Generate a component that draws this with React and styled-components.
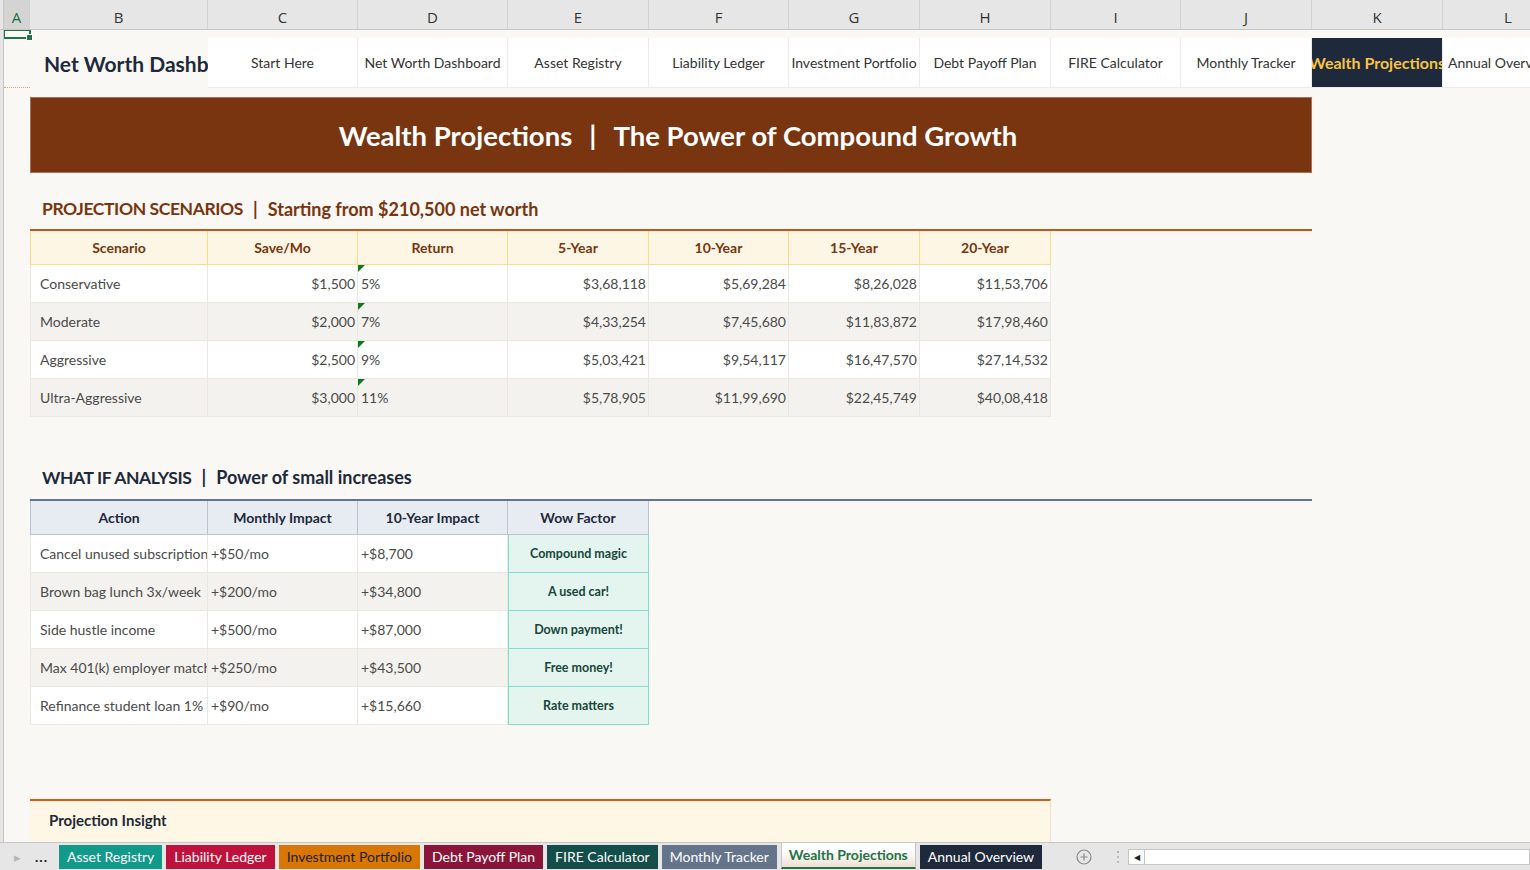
import styled, { createGlobalStyle } from "styled-components";

const WIDTHS = [26, 178, 150, 150, 141, 140, 131, 131, 130, 131, 131, 131];
const LETTERS = ["A", "B", "C", "D", "E", "F", "G", "H", "I", "J", "K", "L"];
const TEMPLATE = WIDTHS.map((w) => `${w}px`).join(" ");

const GlobalStyle = createGlobalStyle`
  html, body { margin: 0; padding: 0; }
  body {
    font-family: Lato, "Liberation Sans", sans-serif;
    background: #f9f8f4;
    overflow: hidden;
  }
  * { box-sizing: border-box; }
`;

const Window = styled.div`
  width: 1530px;
  height: 870px;
  display: flex;
  flex-direction: column;
  overflow: hidden;
  background: #f9f8f4;
`;

/* ---------- column letters ---------- */
const ColumnHeaders = styled.div`
  display: flex;
  height: 30px;
  flex-shrink: 0;
  background: #e6e6e6;
  border-bottom: 1px solid #c6c6c6;
`;

const Corner = styled.div`
  flex: 0 0 4px;
  border-right: 1px solid #c6c6c6;
`;

const ColLetter = styled.div`
  flex: 0 0 ${(p) => p.$w}px;
  display: flex;
  align-items: center;
  justify-content: center;
  padding-top: 4px;
  font-family: "Open Sans", sans-serif;
  font-size: 15px;
  color: ${(p) => (p.$active ? "#1d7044" : "#333")};
  background: ${(p) => (p.$active ? "#d4d4d4" : "transparent")};
  border-right: 1px solid #d2d2d2;
`;

/* ---------- sheet ---------- */
const SheetArea = styled.div`
  flex: 1;
  display: flex;
  overflow: hidden;
`;

const RowHeaders = styled.div`
  flex: 0 0 4px;
  background: #e6e6e6;
  border-right: 1px solid #c6c6c6;
`;

const Grid = styled.div`
  flex: 1;
  display: flex;
  flex-direction: column;
  overflow: hidden;
  position: relative;
`;

const Row = styled.div`
  display: grid;
  grid-template-columns: ${TEMPLATE};
  height: ${(p) => p.$h}px;
  flex-shrink: 0;
`;

const Selection = styled.div`
  position: absolute;
  top: -1px;
  left: -1px;
  width: 28px;
  height: 10px;
  border: 2px solid #217346;
  &::after {
    content: "";
    position: absolute;
    right: -4px;
    bottom: -4px;
    width: 5px;
    height: 5px;
    background: #217346;
    border: 1px solid #fff;
  }
`;

const MarginCell = styled.div`
  grid-column: 1;
  border-bottom: ${(p) => (p.$dotted ? "1px dotted #e3a06e" : "none")};
`;

const SheetTitle = styled.div`
  grid-column: 2;
  display: flex;
  align-items: center;
  padding-left: 14px;
  font-size: 21px;
  font-weight: 700;
  color: #1e293b;
  white-space: nowrap;
  overflow: hidden;
`;

const NavCell = styled.div`
  display: flex;
  align-items: center;
  justify-content: ${(p) => (p.$left ? "flex-start" : "center")};
  padding-left: ${(p) => (p.$left ? "5px" : "0")};
  white-space: nowrap;
  overflow: hidden;
  font-size: ${(p) => (p.$active ? "16px" : "14px")};
  font-weight: ${(p) => (p.$active ? 700 : 400)};
  color: ${(p) => (p.$active ? "#f6c343" : "#333")};
  background: ${(p) => (p.$active ? "#1e293b" : "#fff")};
  border-right: 1px solid #ececec;
  border-bottom: 1px solid #ececec;
`;

const Banner = styled.div`
  grid-column: 2 / 11;
  display: flex;
  align-items: center;
  justify-content: center;
  padding-left: 14px;
  background: #78350f;
  border: 1px solid #a9705a;
  color: #fff;
  font-size: 27.5px;
  font-weight: 700;
  white-space: pre;
`;

const BannerPipe = styled.span`
  margin: 0 17px;
`;

const SectionTitle = styled.div`
  grid-column: 2 / 11;
  display: flex;
  align-items: center;
  padding: 0 0 2px 12px;
  font-size: 18px;
  font-weight: 700;
  white-space: pre;
  color: ${(p) => p.$color};
  border-bottom: 2px solid ${(p) => p.$line};
`;

const Caps = styled.span`
  font-size: 17.5px;
  letter-spacing: -0.4px;
`;

const Pipe = styled.span`
  margin: 0 10px;
`;

const HeadCell = styled.div`
  display: flex;
  align-items: center;
  justify-content: center;
  font-size: 14px;
  font-weight: 700;
  color: ${(p) => p.$color};
  background: ${(p) => p.$bg};
  border-right: 1px solid ${(p) => p.$border};
  border-bottom: 1px solid ${(p) => p.$border};
  ${(p) => p.$first && `border-left: 1px solid ${p.$border};`}
`;

const Cell = styled.div`
  position: relative;
  display: flex;
  align-items: center;
  justify-content: ${(p) => (p.$align === "right" ? "flex-end" : "flex-start")};
  padding: ${(p) => (p.$align === "right" ? "0 2px 0 0" : `0 0 0 ${p.$pad || 3}px`)};
  font-size: 14px;
  color: #4a4a4a;
  white-space: nowrap;
  overflow: hidden;
  background: ${(p) => (p.$alt ? "#f4f2ee" : "#fff")};
  border-right: 1px solid #ebe8e2;
  border-bottom: 1px solid #ebe8e2;
  ${(p) => p.$first && "border-left: 1px solid #ebe8e2;"}
  ${(p) =>
    p.$flag &&
    `&::before {
      content: "";
      position: absolute;
      top: 0;
      left: 0;
      border-top: 7px solid #0b7a1c;
      border-right: 7px solid transparent;
    }`}
`;

const WowCell = styled.div`
  display: flex;
  align-items: center;
  justify-content: center;
  font-size: 12.5px;
  font-weight: 700;
  color: #17463b;
  background: #e4f4ee;
  border: 1px solid #80dfcd;
  border-top: none;
`;

const InsightBox = styled.div`
  grid-column: 2 / 9;
  background: #fef7e6;
  border-top: 2px solid #c8601c;
  border-right: 1px solid #efe2c8;
  padding: 10px 0 0 19px;
  font-size: 15px;
  font-weight: 700;
  color: #1f2937;
`;

/* ---------- sheet tabs ---------- */
const TabBar = styled.div`
  height: 28px;
  flex-shrink: 0;
  display: flex;
  align-items: center;
  background: #e6e6e6;
  border-top: 1px solid #c6c6c6;
`;

const TabNav = styled.div`
  display: flex;
  align-items: center;
  width: 59px;
  padding-left: 14px;
  gap: 14px;
  font-size: 13px;
  color: #b5b5b5;
  & b {
    color: #222;
    font-size: 14px;
    letter-spacing: 1px;
  }
`;

const Tab = styled.div`
  height: 24px;
  display: flex;
  align-items: center;
  padding: 0 8px;
  margin-right: 4px;
  font-size: 14px;
  white-space: nowrap;
  color: ${(p) => p.$fg || "#fff"};
  background: ${(p) => p.$bg};
  font-weight: ${(p) => (p.$active ? 700 : 400)};
  ${(p) =>
    p.$active &&
    `height: 26px;
     margin-top: -2px;
     padding: 0 7px;
     background: linear-gradient(#ffffff 30%, #f0dfd2);
     border-bottom: 2px solid #217346;
     border-left: 1px solid #c6c6c6;
     border-right: 1px solid #c6c6c6;`}
`;

const TabTools = styled.div`
  display: flex;
  align-items: center;
  margin-left: 30px;
  gap: 24px;
  color: #8a8a8a;
`;

const HScroll = styled.div`
  flex: 1;
  height: 16px;
  margin-left: 8px;
  display: flex;
  background: #fff;
  border: 1px solid #c6c6c6;
`;

const ScrollBtn = styled.div`
  width: 16px;
  display: flex;
  align-items: center;
  justify-content: center;
  border-right: 1px solid #c6c6c6;
  font-size: 8px;
  color: #222;
`;

const navItems = [
  "Start Here",
  "Net Worth Dashboard",
  "Asset Registry",
  "Liability Ledger",
  "Investment Portfolio",
  "Debt Payoff Plan",
  "FIRE Calculator",
  "Monthly Tracker",
];

const scenarios = [
  ["Conservative", "$1,500", "5%", "$3,68,118", "$5,69,284", "$8,26,028", "$11,53,706"],
  ["Moderate", "$2,000", "7%", "$4,33,254", "$7,45,680", "$11,83,872", "$17,98,460"],
  ["Aggressive", "$2,500", "9%", "$5,03,421", "$9,54,117", "$16,47,570", "$27,14,532"],
  ["Ultra-Aggressive", "$3,000", "11%", "$5,78,905", "$11,99,690", "$22,45,749", "$40,08,418"],
];

const whatIf = [
  ["Cancel unused subscription", "+$50/mo", "+$8,700", "Compound magic"],
  ["Brown bag lunch 3x/week", "+$200/mo", "+$34,800", "A used car!"],
  ["Side hustle income", "+$500/mo", "+$87,000", "Down payment!"],
  ["Max 401(k) employer match", "+$250/mo", "+$43,500", "Free money!"],
  ["Refinance student loan 1%", "+$90/mo", "+$15,660", "Rate matters"],
];

const tabs = [
  { label: "Asset Registry", bg: "#11998a" },
  { label: "Liability Ledger", bg: "#be123c" },
  { label: "Investment Portfolio", bg: "#d97706", fg: "#1f1f1f" },
  { label: "Debt Payoff Plan", bg: "#8a1538" },
  { label: "FIRE Calculator", bg: "#134e4a" },
  { label: "Monthly Tracker", bg: "#64748b" },
  { label: "Wealth Projections", active: true, fg: "#217346" },
  { label: "Annual Overview", bg: "#1e293b" },
];

const amber = { $color: "#78350f", $bg: "#fef6e4", $border: "#fcdc86" };
const slate = { $color: "#1e293b", $bg: "#e7ecf2", $border: "#b9c4d2" };

export default function App() {
  return (
    <Window>
      <GlobalStyle />
      <ColumnHeaders>
        <Corner />
        {LETTERS.map((l, i) => (
          <ColLetter key={l} $w={WIDTHS[i]} $active={i === 0}>
            {l}
          </ColLetter>
        ))}
      </ColumnHeaders>

      <SheetArea>
        <RowHeaders />
        <Grid>
          <Selection />
          <Row $h={8} />
          <Row $h={50}>
            <MarginCell $dotted />
            <SheetTitle>Net Worth Dashboard</SheetTitle>
            {navItems.map((n) => (
              <NavCell key={n}>{n}</NavCell>
            ))}
            <NavCell $active>Wealth Projections</NavCell>
            <NavCell $left>Annual Overview</NavCell>
          </Row>
          <Row $h={9} />
          <Row $h={76}>
            <MarginCell />
            <Banner>
              Wealth Projections
              <BannerPipe>|</BannerPipe>
              The Power of Compound Growth
            </Banner>
          </Row>
          <Row $h={17} />
          <Row $h={41}>
            <MarginCell />
            <SectionTitle $color="#78350f" $line="#c2571a">
              <Caps>PROJECTION SCENARIOS</Caps>
              <Pipe>|</Pipe>
              Starting from $210,500 net worth
            </SectionTitle>
          </Row>
          <Row $h={34}>
            <MarginCell />
            {["Scenario", "Save/Mo", "Return", "5-Year", "10-Year", "15-Year", "20-Year"].map(
              (h, i) => (
                <HeadCell key={h} {...amber} $first={i === 0}>
                  {h}
                </HeadCell>
              )
            )}
          </Row>
          {scenarios.map((r, ri) => (
            <Row $h={38} key={r[0]}>
              <MarginCell />
              <Cell $first $pad={9} $alt={ri % 2 === 1}>
                {r[0]}
              </Cell>
              <Cell $align="right" $alt={ri % 2 === 1}>
                {r[1]}
              </Cell>
              <Cell $flag $alt={ri % 2 === 1}>
                {r[2]}
              </Cell>
              {r.slice(3).map((v, vi) => (
                <Cell key={vi} $align="right" $alt={ri % 2 === 1}>
                  {v}
                </Cell>
              ))}
            </Row>
          ))}

          <Row $h={40} />
          <Row $h={44}>
            <MarginCell />
            <SectionTitle $color="#1e293b" $line="#64748b">
              <Caps>WHAT IF ANALYSIS</Caps>
              <Pipe>|</Pipe>
              Power of small increases
            </SectionTitle>
          </Row>
          <Row $h={34}>
            <MarginCell />
            {["Action", "Monthly Impact", "10-Year Impact", "Wow Factor"].map((h, i) => (
              <HeadCell key={h} {...slate} $first={i === 0}>
                {h}
              </HeadCell>
            ))}
          </Row>
          {whatIf.map((r, ri) => (
            <Row $h={38} key={r[0]}>
              <MarginCell />
              <Cell $first $pad={9} $alt={ri % 2 === 1}>
                {r[0]}
              </Cell>
              <Cell $alt={ri % 2 === 1}>{r[1]}</Cell>
              <Cell $alt={ri % 2 === 1}>{r[2]}</Cell>
              <WowCell>{r[3]}</WowCell>
            </Row>
          ))}

          <Row $h={74} />
          <Row $h={60}>
            <MarginCell />
            <InsightBox>Projection Insight</InsightBox>
          </Row>
        </Grid>
      </SheetArea>

      <TabBar>
        <TabNav>
          <span>▸</span>
          <b>...</b>
        </TabNav>
        {tabs.map((t) => (
          <Tab key={t.label} $bg={t.bg} $fg={t.fg} $active={t.active}>
            {t.label}
          </Tab>
        ))}
        <TabTools>
          <svg width="16" height="16" viewBox="0 0 16 16">
            <circle cx="8" cy="8" r="7" fill="none" stroke="#8a8a8a" strokeWidth="1.2" />
            <path d="M8 4.5v7M4.5 8h7" stroke="#8a8a8a" strokeWidth="1.2" />
          </svg>
          <svg width="4" height="14" viewBox="0 0 4 14">
            <circle cx="2" cy="2" r="1" fill="#aaa" />
            <circle cx="2" cy="7" r="1" fill="#aaa" />
            <circle cx="2" cy="12" r="1" fill="#aaa" />
          </svg>
        </TabTools>
        <HScroll>
          <ScrollBtn>◀</ScrollBtn>
        </HScroll>
      </TabBar>
    </Window>
  );
}
